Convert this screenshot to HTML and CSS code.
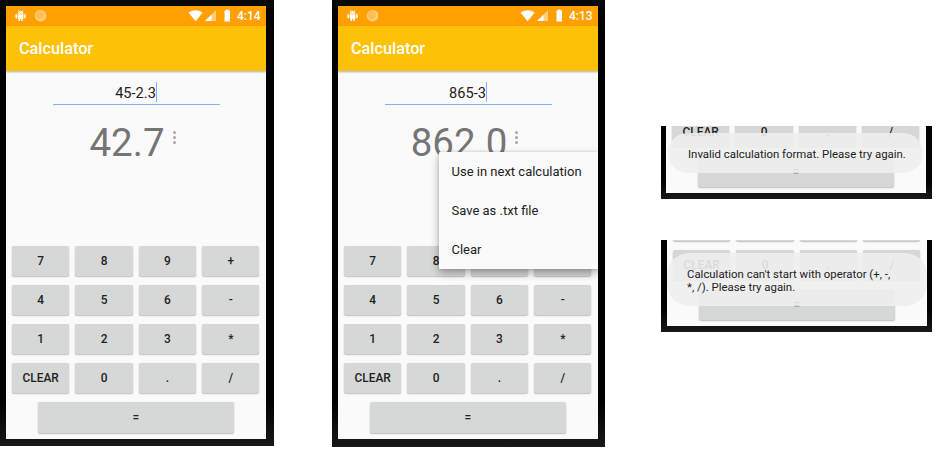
FILE: index.html
```html
<!DOCTYPE html>
<html lang="en">
<head>
<meta charset="utf-8">
<title>Calculator</title>
<link rel="stylesheet" href="styles.css">
</head>
<body>
<svg class="defs" width="0" height="0">
  <symbol id="status-left" viewBox="0 0 32 14">
    <g fill="#fff">
      <path d="M2.7 4.7a3 3 0 0 1 1.1-2.1L3 1.3l.5-.3.9 1.3a3.600 3.600 0 0 1 2.400 0L7.700 1l.5.3-.8 1.300a3 3 0 0 1 1.100 2.100z"/>
      <path d="M2.700 5.200h5.800v4.600H7.700V12H6.200V9.800H5V12H3.500V9.800h-.8z"/>
      <rect x="0.400" y="5" width="1.600" height="4.400" rx=".8"/><rect x="9.200" y="5" width="1.600" height="4.400" rx=".8"/>
    </g>
    <circle cx="4.500" cy="3.700" r=".4" fill="#ffa000"/><circle cx="6.700" cy="3.700" r=".4" fill="#ffa000"/>
    <circle cx="25.500" cy="6.700" r="5.800" fill="#ffcf80"/><circle cx="24.700" cy="6" r="4.300" fill="#ffbe58"/>
  </symbol>
  <symbol id="status-right" viewBox="0 0 44 14">
    <path fill="#fff" d="M.5 3.500Q7.500-.8 14.700 3.500L7.600 12.200z"/>
    <path fill="#ffcf80" d="M28 1.200v10.900H17z"/><path fill="#fff" d="M23.500 5.700v6.400H17z"/>
    <path fill="#fff" d="M36.500 1.400h1.300V.5h2.800v.9H42v11.200h-5.500z"/>
  </symbol>
</svg>
<main class="board">
  <section class="phone">
    <div class="screen">
      <header class="status">
        <svg class="notes"><use href="#status-left"/></svg>
        <svg class="signals"><use href="#status-right"/></svg>
        <span class="clock">4:14</span>
      </header>
      <h1 class="appbar">Calculator</h1>
      <div class="entry">45-2.3<i class="caret"></i></div>
      <div class="result"><span class="value">42.7</span><span class="dots"><i></i><i></i><i></i></span></div>
      <div class="keys">
        <b>7</b><b>8</b><b>9</b><b>+</b>
        <b>4</b><b>5</b><b>6</b><b>-</b>
        <b>1</b><b>2</b><b>3</b><b>*</b>
        <b>CLEAR</b><b>0</b><b>.</b><b>/</b>
        <b class="equals">=</b>
      </div>
    </div>
  </section>
  <section class="phone tall">
    <div class="screen">
      <header class="status">
        <svg class="notes"><use href="#status-left"/></svg>
        <svg class="signals"><use href="#status-right"/></svg>
        <span class="clock">4:13</span>
      </header>
      <h1 class="appbar">Calculator</h1>
      <div class="entry">865-3<i class="caret"></i></div>
      <div class="result"><span class="value">862.0</span><span class="dots"><i></i><i></i><i></i></span></div>
      <div class="keys">
        <b>7</b><b>8</b><b>9</b><b>+</b>
        <b>4</b><b>5</b><b>6</b><b>-</b>
        <b>1</b><b>2</b><b>3</b><b>*</b>
        <b>CLEAR</b><b>0</b><b>.</b><b>/</b>
        <b class="equals">=</b>
      </div>
      <ul class="menu"><li>Use in next calculation</li><li>Save as .txt file</li><li>Clear</li></ul>
    </div>
  </section>
  <div class="details">
    <section class="snippet first">
      <div class="screen">
        <div class="keys">
          <b>CLEAR</b><b>0</b><b>.</b><b>/</b>
          <b class="equals">=</b>
        </div>
        <div class="toast">Invalid calculation format. Please try again.</div>
      </div>
    </section>
    <section class="snippet second">
      <div class="screen">
        <div class="keys">
          <b>1</b><b>2</b><b>3</b><b>*</b>
          <b>CLEAR</b><b>0</b><b>.</b><b>/</b>
          <b class="equals">=</b>
        </div>
        <div class="toast">Calculation can't start with operator (+, -,<br>*, /). Please try again.</div>
      </div>
    </section>
  </div>
</main>
</body>
</html>
```
FILE: styles.css
```css
* { box-sizing: border-box; }
body {
  margin: 0;
  background: #fff;
  color: #212121;
  font-family: Roboto, "Liberation Sans", sans-serif;
  overflow: hidden;
}
.defs { display: block; position: absolute; }
.board { display: flex; align-items: flex-start; }
.phone {
  width: 274px;
  height: 446px;
  padding: 6px 8px 7px 6px;
  background: linear-gradient(#080808, #000 30px, #000 400px, #171918);
}
.tall { width: 273px; height: 447px; margin-left: 58px; padding: 6px 7px 8px 6px; }
.screen {
  position: relative;
  display: flex;
  flex-direction: column;
  width: 260px;
  height: 433px;
  overflow: hidden;
  background: #fafafa;
}
.status {
  display: flex;
  flex: none;
  height: 20px;
  padding: 3px 6px 0 9px;
  background: #ffa000;
  color: #fff;
}
.notes { width: 32px; height: 14px; }
.signals { width: 44px; height: 14px; margin-left: auto; }
.clock { width: 23px; margin-left: 5px; font-size: 12px; font-weight: 500; line-height: 14px; white-space: nowrap; }
.appbar {
  flex: none;
  height: 45px;
  margin: 0;
  padding-left: 13px;
  background: #ffc107;
  box-shadow: 0 1px 2px rgba(0, 0, 0, .3);
  color: #fff;
  font-size: 16.250px;
  font-weight: 500;
  line-height: 45px;
}
.entry {
  display: flex;
  flex: none;
  justify-content: center;
  width: 167px;
  height: 24px;
  margin: 10px 0 0 46.500px;
  border-bottom: 1.500px solid #82b1ff;
  font-size: 14.600px;
  line-height: 24px;
}
.caret { width: 1px; height: 20px; margin-top: 1px; background: #82b1ff; }
.result { display: flex; flex: none; justify-content: center; height: 52px; margin-top: 12px; padding-right: 7px; }
.value { color: #757575; font-size: 38.500px; line-height: 52px; }
.dots { display: flex; flex-direction: column; gap: 2px; margin: 14px 0 0 8px; }
.dots i { width: 3px; height: 3px; border-radius: 50%; background: #a6a6a6; }
.keys {
  display: grid;
  grid-template-columns: repeat(4, 57.300px);
  grid-auto-rows: 30.500px;
  gap: 8.500px 6.100px;
  margin-top: auto;
  padding: 0 6px 7px;
}
.keys b {
  border-radius: 2px;
  background: #d6d8d7;
  box-shadow: 0 1px 1.500px rgba(0, 0, 0, .24), 0 0 1px rgba(0, 0, 0, .1);
  font-size: 11.900px;
  font-weight: 500;
  line-height: 31px;
  text-align: center;
}
.keys .equals { grid-column: 1 / -1; justify-self: center; width: 196px; height: 31.500px; }
.menu {
  position: absolute;
  top: 146px;
  left: 101px;
  width: 160px;
  height: 117px;
  margin: 0;
  padding: 0 0 0 12.500px;
  border-radius: 1px;
  background: #fafafa;
  box-shadow: 0 4px 9px rgba(0, 0, 0, .32), 0 0 3px rgba(0, 0, 0, .15);
  font-size: 13px;
  line-height: 39px;
  list-style: none;
}
.details { margin: 126px 0 0 56px; }
.snippet { width: 271px; background: linear-gradient(#000, #000 75%, #171918); }
.first { height: 73px; padding-left: 5px; }
.second { height: 92px; margin-top: 41px; padding-left: 6px; }
.first .screen { height: 67px; }
.second .screen { height: 86px; }
.snippet .screen { justify-content: flex-end; }
.toast {
  position: absolute;
  background: rgba(238, 238, 238, .9);
  border-radius: 22px;
  font-size: 11.400px;
  letter-spacing: 0;
  line-height: 13px;
  white-space: nowrap;
}
.first .toast { top: 7px; left: 2px; width: 255px; height: 40px; padding: 15px 0 0 20px; }
.second .toast { top: 13px; left: 0; width: 260px; height: 53px; padding: 15px 0 0 20px; }
```
